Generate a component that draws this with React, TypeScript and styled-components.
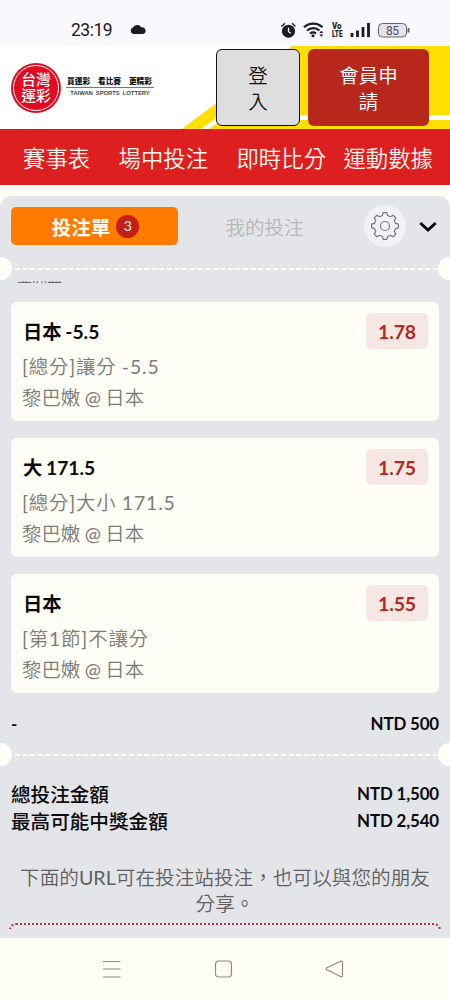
import React from "react";
import styled, { createGlobalStyle } from "styled-components";

const GlobalStyle = createGlobalStyle`
  * { box-sizing: border-box; }
  body { margin: 0; background: #fffef6; font-family: Lato, "Noto Sans CJK TC", sans-serif; }
  button { font-family: inherit; margin: 0; }
`;

const lightStack = `Lato, "Noto Sans CJK TC DemiLight", "Noto Sans CJK TC", sans-serif`;

const Screen = styled.div`
  width: 450px;
  height: 1000px;
  overflow: hidden;
  display: flex;
  flex-direction: column;
  background: #fffef6;
`;

const StatusBar = styled.div`
  height: 45px;
  flex: none;
  display: flex;
  align-items: flex-start;
  padding: 20px 39px 0 71px;
  background: #faf8ff;
  color: #1d1b22;
`;
const Clock = styled.span`
  width: 58px;
  font: 400 17.5px/20px Roboto, sans-serif;
  letter-spacing: -0.5px;
`;
const StatusIcons = styled.div`
  margin-left: auto;
  display: flex;
`;

const Header = styled.header`
  position: relative;
  height: 84px;
  flex: none;
  display: flex;
  padding: 4px 21px 3px 11px;
  background: #fff;
`;
const HeaderArt = styled.svg`
  position: absolute;
  inset: 0;
`;
const Brand = styled.div`
  position: relative;
  width: 205px;
  display: flex;
  padding-top: 14px;
`;
const Seal = styled.div`
  width: 50px;
  height: 50px;
  padding: 2px;
  border-radius: 50%;
  background: #e10a20;
`;
const SealRing = styled.div`
  height: 46px;
  border: 1px solid #fff;
  border-radius: 50%;
  padding-top: 6px;
  color: #fff;
  font-size: 14.8px;
  line-height: 15.5px;
  font-weight: 500;
  text-align: center;
  white-space: nowrap;
`;
const Slogan = styled.div`
  width: 88px;
  margin: 12px 0 0 5px;
  text-align: center;
  white-space: nowrap;
  color: #111;
`;
const SloganMain = styled.div`
  display: flex;
  justify-content: space-between;
  padding: 0 2px 0 1px;
  height: 13px;
  border-bottom: 1px solid #777;
  font-size: 7.7px;
  line-height: 12px;
  font-weight: 900;
`;
const SloganSub = styled.div`
  font: 700 5.8px/11px "Liberation Sans", sans-serif;
  word-spacing: 1.5px;
  color: #444;
`;

const HeaderButton = styled.button<{ $primary?: boolean }>`
  position: relative;
  width: ${(p) => (p.$primary ? 121 : 84)}px;
  height: 77px;
  margin-left: ${(p) => (p.$primary ? 8 : 0)}px;
  padding: 2px 0 0;
  border: ${(p) => (p.$primary ? "0" : "1px solid #111")};
  border-radius: 6px;
  background: ${(p) => (p.$primary ? "#b8271b" : "#dedede")};
  color: ${(p) => (p.$primary ? "#fff" : "#111")};
  font-size: 19.5px;
  line-height: 26px;
  font-weight: 350;
`;

const Nav = styled.nav`
  height: 56px;
  flex: none;
  display: flex;
  justify-content: space-between;
  padding: 0 17px 0 23px;
  background: #de1f20;
`;
const NavItem = styled.a<{ $gap?: number }>`
  color: #fff4ec;
  font-size: 22.4px;
  line-height: 59px;
  font-weight: 350;
  margin-left: ${(p) => p.$gap ?? 0}px;
  white-space: nowrap;
`;

const Slip = styled.main`
  height: 742px;
  flex: none;
  margin-top: 11px;
  overflow: hidden;
  border-radius: 12px 12px 0 0;
  background: #e4e5e8;
`;
const Tabs = styled.div`
  height: 60px;
  display: flex;
  align-items: center;
  padding: 0 11px;
`;
const ActiveTab = styled.button`
  width: 167px;
  height: 38px;
  display: flex;
  align-items: center;
  justify-content: center;
  gap: 6px;
  padding: 0 0 0 2px;
  border: 0;
  border-radius: 5px;
  background: #ff7b00;
  color: #fffaf0;
  font-size: 19.5px;
  font-weight: 700;
`;
const Count = styled.span`
  width: 23px;
  height: 23px;
  border-radius: 50%;
  background: #c41e16;
  font-size: 14px;
  font-weight: 400;
  line-height: 22px;
`;
const IdleTab = styled.span`
  width: 173px;
  text-align: center;
  font-size: 19.5px;
  font-weight: 350;
  color: #b7b8ba;
`;
const GearButton = styled.span`
  display: flex;
  align-items: center;
  justify-content: center;
  width: 42px;
  height: 42px;
  margin-left: 13px;
  border-radius: 50%;
  background: #f1f2f5;
`;
const Chevron = styled.svg`
  margin: 2px 0 0 13px;
`;

const TicketEdge = styled.div`
  height: 24px;
  display: flex;
  align-items: center;
  justify-content: space-between;
`;
const Notch = styled.i<{ $right?: boolean }>`
  width: 12px;
  height: 23px;
  background: #fffef6;
  border-radius: ${(p) => (p.$right ? "12px 0 0 12px" : "0 12px 12px 0")};
`;
const Perforation = styled.i`
  flex: 1;
  height: 2px;
  margin: 2px 1px 0 3px;
  background: repeating-linear-gradient(90deg, #fffef6 0 5px, transparent 5px 7.6px);
`;

const ClippedLine = styled.div`
  height: 3px;
  overflow: hidden;
  margin: 1px 0 18px 17px;
`;
const ClippedText = styled.div`
  margin-top: -12px;
  font-size: 15px;
  line-height: 15px;
  font-weight: 300;
  color: #555;
`;

const Bets = styled.section`
  display: flex;
  flex-direction: column;
  gap: 17px;
  padding: 0 11px;
`;
const BetCard = styled.article`
  height: 119px;
  display: flex;
  justify-content: space-between;
  padding: 11px 11px 0;
  border-radius: 6px;
  background: #fffef6;
`;
const BetTitle = styled.div`
  height: 36px;
  padding-left: 1px;
  font-size: 19.3px;
  line-height: 37px;
  font-weight: 700;
  word-spacing: -1px;
  color: #0a0a0a;
`;
const BetLine = styled.div<{ $spaced?: boolean }>`
  height: ${(p) => (p.$spaced ? 34 : 29)}px;
  font-family: ${lightStack};
  font-size: 19.4px;
  line-height: ${(p) => (p.$spaced ? 35 : 29)}px;
  letter-spacing: ${(p) => (p.$spaced ? 0.85 : 0)}px;
  word-spacing: ${(p) => (p.$spaced ? -0.5 : -0.5)}px;
  font-weight: 400;
  color: #7c7c79;
`;
const Odds = styled.span`
  width: 62px;
  height: 36px;
  border-radius: 5px;
  background: #f7e7e2;
  color: #b52824;
  font-size: 19.5px;
  line-height: 37px;
  font-weight: 700;
  letter-spacing: -0.2px;
  text-align: center;
`;

const StakeRow = styled.div`
  height: 49px;
  display: flex;
  justify-content: space-between;
  padding: 17px 11px 0;
  font-size: 16.9px;
  line-height: 28px;
  font-weight: 700;
  letter-spacing: -0.15px;
  color: #0b0b0d;
`;
const Totals = styled.section`
  padding: 14px 11px 0;
`;
const TotalRow = styled.div`
  height: 27px;
  display: flex;
  justify-content: space-between;
  color: #0b0b0d;
`;
const TotalLabel = styled.span`
  font-size: 19.6px;
  line-height: 29px;
  font-weight: 500;
`;
const TotalValue = styled.span`
  font-size: 16.9px;
  line-height: 27px;
  font-weight: 700;
  letter-spacing: -0.15px;
`;
const ShareNote = styled.p`
  margin: 31px 0 0;
  text-align: center;
  font-family: ${lightStack};
  font-size: 19.65px;
  line-height: 26px;
  font-weight: 400;
  color: #5f6063;
`;
const ShareBoxTop = styled.div`
  height: 6px;
  margin: 6px 9px 0;
  overflow: hidden;
`;
const ShareBox = styled.div`
  height: 40px;
  border: 2px dotted #b53a4c;
  border-radius: 7px;
`;

const SystemNav = styled.footer`
  flex: 1;
  background: #fffef6;
`;

const bets = [
  { title: "日本 -5.5", market: "[總分]讓分 -5.5", odds: "1.78" },
  { title: "大 171.5", market: "[總分]大小 171.5", odds: "1.75" },
  { title: "日本", market: "[第1節]不讓分", odds: "1.55" },
];

const gearPath = (() => {
  const n = 8;
  const pts: string[] = [];
  for (let i = 0; i < n; i++) {
    const a = (i * 2 * Math.PI) / n - Math.PI / 2;
    [[-0.25, 10.8], [-0.14, 13.5], [0.14, 13.5], [0.25, 10.8]].forEach(([d, r]) => {
      pts.push(`${(15 + r * Math.cos(a + d)).toFixed(2)} ${(15 + r * Math.sin(a + d)).toFixed(2)}`);
    });
  }
  return `M${pts.join("L")}Z`;
})();

const Perforated = () => (
  <TicketEdge>
    <Notch />
    <Perforation />
    <Notch $right />
  </TicketEdge>
);

export default function App() {
  return (
    <Screen>
      <GlobalStyle />
      <StatusBar>
        <Clock>23:19</Clock>
        <svg width="18" height="20" viewBox="0 0 18 20">
          <path d="M4 14a3.4 3.4 0 0 1-.2-6.400A5 5 0 0 1 12.500 7.500a3.300 3.300 0 0 1 1.500 6.500Z" fill="#1d1b22" />
        </svg>
        <StatusIcons>
          <svg width="131" height="20" viewBox="0 0 131 20" fill="none" stroke="#1d1b22">
            <circle cx="8.500" cy="11.200" r="6.500" fill="#1d1b22" stroke="none" />
            <path d="M1.500 6.500 5 3.300M15.500 6.500 12 3.300" strokeWidth="1.500" />
            <path d="M8.500 7.700v4l2.500 1.500" stroke="#faf8ff" strokeWidth="1.300" />
            <path d="M24 7.300a13.500 13.500 0 0 1 18.500 0M27 10.500a9.300 9.300 0 0 1 12.500 0M30 13.500a5 5 0 0 1 6 0" strokeWidth="2.200" />
            <circle cx="33" cy="15.800" r="1.500" fill="#1d1b22" stroke="none" />
            <path d="m39.300 13 2-2.300 2 2.300ZM39.300 14.500l2 2.300 2-2.300Z" fill="#1d1b22" stroke="none" />
            <g fill="#1d1b22" stroke="none" fontFamily="Roboto" fontWeight="900" fontSize="8.500">
              <text x="52" y="9.200" textLength="9.500" lengthAdjust="spacingAndGlyphs">Vo</text>
              <text x="52" y="17.300" textLength="10.500" lengthAdjust="spacingAndGlyphs">LTE</text>
            </g>
            <path d="M72 13v4M77.500 10.500V17M83 7v10M88.500 3v14" strokeWidth="2.800" />
            <rect x="98.500" y="3.500" width="28" height="13.500" rx="4" fill="#e5e3e9" stroke="#66646b" />
            <path d="M128.500 8v4.500" strokeWidth="2" stroke="#66646b" />
            <text x="106" y="14.500" fontFamily="Roboto" fontSize="12" fill="#504e54" stroke="none" textLength="13">85</text>
          </svg>
        </StatusIcons>
      </StatusBar>

      <Header>
        <HeaderArt width="450" height="84" viewBox="0 0 450 84">
          <path d="M182 84 292 1H450V84Z" fill="#ffdf00" />
          <path d="M201 84 220 70H450V75H222L209 84Z" fill="#fff" />
        </HeaderArt>
        <Brand>
          <Seal>
            <SealRing>台灣<br />運彩</SealRing>
          </Seal>
          <Slogan>
            <SloganMain>
              <span>買運彩</span>
              <span>看比賽</span>
              <span>更精彩</span>
            </SloganMain>
            <SloganSub>TAIWAN SPORTS LOTTERY</SloganSub>
          </Slogan>
        </Brand>
        <HeaderButton>登<br />入</HeaderButton>
        <HeaderButton $primary>會員申<br />請</HeaderButton>
      </Header>

      <Nav>
        <NavItem>賽事表</NavItem>
        <NavItem $gap={11}>場中投注</NavItem>
        <NavItem $gap={11}>即時比分</NavItem>
        <NavItem>運動數據</NavItem>
      </Nav>

      <Slip>
        <Tabs>
          <ActiveTab>投注單<Count>3</Count></ActiveTab>
          <IdleTab>我的投注</IdleTab>
          <GearButton>
            <svg width="30" height="30" viewBox="0 0 30 30" fill="none" stroke="#77787b" strokeWidth="1.200" strokeLinejoin="round">
              <path d={gearPath} />
              <circle cx="15" cy="15" r="4.500" />
            </svg>
          </GearButton>
          <Chevron width="18" height="12" viewBox="0 0 18 12" fill="none" stroke="#0b0b0d" strokeWidth="3">
            <path d="m1.300 2 7.700 7 7.700-7" />
          </Chevron>
        </Tabs>
        <Perforated />
        <ClippedLine>
          <ClippedText>亞洲盃</ClippedText>
        </ClippedLine>
        <Bets>
          {bets.map((bet) => (
            <BetCard key={bet.title}>
              <div>
                <BetTitle>{bet.title}</BetTitle>
                <BetLine $spaced>{bet.market}</BetLine>
                <BetLine>黎巴嫩 @ 日本</BetLine>
              </div>
              <Odds>{bet.odds}</Odds>
            </BetCard>
          ))}
        </Bets>
        <StakeRow>
          <span>-</span>
          <span>NTD 500</span>
        </StakeRow>
        <Perforated />
        <Totals>
          <TotalRow>
            <TotalLabel>總投注金額</TotalLabel>
            <TotalValue>NTD 1,500</TotalValue>
          </TotalRow>
          <TotalRow>
            <TotalLabel>最高可能中獎金額</TotalLabel>
            <TotalValue>NTD 2,540</TotalValue>
          </TotalRow>
        </Totals>
        <ShareNote>下面的URL可在投注站投注，也可以與您的朋友<br />分享。</ShareNote>
        <ShareBoxTop>
          <ShareBox />
        </ShareBoxTop>
      </Slip>

      <SystemNav>
        <svg width="450" height="62" viewBox="0 0 450 62" fill="none" stroke="#8f8a86" strokeWidth="1.200">
          <path d="M103 23.500h17.500M103 31h17.500M103 39h17.500" />
          <rect x="215.500" y="23" width="16" height="16" rx="3.500" />
          <path d="M327 29.800 340.500 23.300Q342.500 22.500 342.500 24.500V37.500Q342.500 39.500 340.500 38.500L327 31.800Q325.500 30.800 327 29.800Z" />
        </svg>
      </SystemNav>
    </Screen>
  );
}
